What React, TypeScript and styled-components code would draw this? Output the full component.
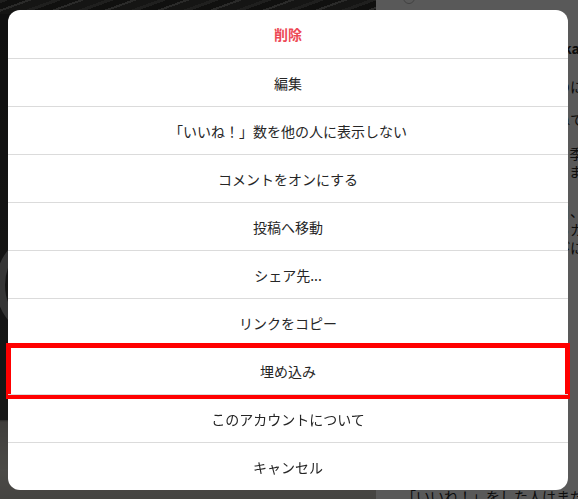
import styled, { createGlobalStyle } from "styled-components";

const Global = createGlobalStyle`
  html, body {
    margin: 0;
    padding: 0;
    height: 100%;
    overflow: hidden;
  }
  body {
    font-family: "Noto Sans CJK JP", "Noto Sans", "Liberation Sans", sans-serif;
    color: #262626;
  }
  #root {
    height: 100%;
  }
`;

const menuItems = [
  { label: "削除", danger: true },
  { label: "編集" },
  { label: "「いいね！」数を他の人に表示しない" },
  { label: "コメントをオンにする" },
  { label: "投稿へ移動" },
  { label: "シェア先..." },
  { label: "リンクをコピー" },
  { label: "埋め込み", marked: true },
  { label: "このアカウントについて" },
  { label: "キャンセル" },
];

// comment lines behind the dim layer, only a sliver shows at the right edge
const comments = [
  { lines: ["今日は朝から友達と海辺のにぎやかな通りへ"], gap: 15 },
  { lines: ["街の小さな本屋さんを訪ねてみました"], gap: 16 },
  { lines: ["古いビルの屋上から見える季節の景色は", "毎日少しずつ変わっていきます。"], gap: 22 },
  { lines: ["朝の光の中で撮った一枚目、静かな時間", "ぼんやりと外を眺めながらカメラを構え", "季節の移ろいを感じるたびに思い出す"], gap: 0 },
];

export default function App() {
  return (
    <>
      <Global />
      <Page>
        <Photo>
          <Ring />
        </Photo>
        <Side>
          <SideInner>
            <Header>
              <Avatar />
            </Header>
            <UserName>tokyo_photo_walks_naka</UserName>
            {comments.map((c, i) => (
              <Comment key={i} gap={c.gap}>
                {c.lines.map((l) => (
                  <Line key={l}>{l}</Line>
                ))}
              </Comment>
            ))}
            <Spacer />
            <Likes>「いいね！」をした人はまだいません</Likes>
          </SideInner>
        </Side>
      </Page>

      <Overlay>
        <Modal>
          {menuItems.map((item) => (
            <Row key={item.label} danger={item.danger}>
              {item.label}
              {item.marked && <Mark />}
            </Row>
          ))}
        </Modal>
      </Overlay>
    </>
  );
}

const Page = styled.div`
  display: flex;
  height: 100%;
`;

const Photo = styled.div`
  position: relative;
  width: 376px;
  flex-shrink: 0;
  overflow: hidden;
  background:
    linear-gradient(180deg, transparent 0, transparent 418px, #b8b5ad 422px, #d6d3ca 470px, #c5c2ba 100%),
    repeating-linear-gradient(160deg, #5a5a58 0 3px, #2e2e2c 3px 9px, #7a7976 9px 11px, #3c3c3a 11px 18px),
    #3d3d3b;
  background-size: 100% 100%, 100% 14px, 100% 100%;
  background-repeat: no-repeat, no-repeat, no-repeat;

  &::after {
    content: "";
    position: absolute;
    left: 0;
    right: 0;
    top: 14px;
    height: 406px;
    background: linear-gradient(180deg, #2f2f2e, #3a3a39 60%, #444442);
  }
`;

const Ring = styled.div`
  position: absolute;
  z-index: 1;
  left: -4px;
  top: 228px;
  width: 96px;
  height: 96px;
  border-radius: 50%;
  border: 9px solid #9a9b9c;
`;

const Side = styled.div`
  flex: 1;
  background: #fff;
  overflow: hidden;
`;

const SideInner = styled.div`
  display: flex;
  flex-direction: column;
  height: 100%;
  box-sizing: border-box;
  padding: 0 0 0 26px;
  font-size: 14px;
  line-height: 18px;
  white-space: nowrap;
  color: #262626;
`;

const Header = styled.div`
  height: 4px;
  display: flex;
  align-items: flex-end;
  overflow: hidden;
  padding-left: 1px;
  margin-bottom: 35px;
`;

const Avatar = styled.div`
  width: 10px;
  height: 10px;
  flex-shrink: 0;
  border-radius: 50%;
  border: 1px solid #bbb;
`;

const UserName = styled.div`
  font-weight: 600;
  margin-bottom: 20px;
`;

const Comment = styled.div<{ gap: number }>`
  margin-bottom: ${(p) => p.gap}px;
`;

const Line = styled.div`
  height: 18px;
`;

const Spacer = styled.div`
  flex: 1;
`;

const Likes = styled.div`
  margin-bottom: -6px;
  height: 18px;
`;

const Overlay = styled.div`
  position: fixed;
  inset: 0;
  z-index: 10;
  background: rgba(0, 0, 0, 0.65);
  display: flex;
  align-items: flex-start;
  padding: 10px 0 0 8px;
`;

const Modal = styled.div`
  width: 560px;
  background: #fff;
  border-radius: 12px;
  display: flex;
  flex-direction: column;
`;

const Row = styled.div<{ danger?: boolean }>`
  position: relative;
  height: 48px;
  box-sizing: border-box;
  display: flex;
  align-items: center;
  justify-content: center;
  font-size: 14px;
  line-height: 18px;
  color: ${(p) => (p.danger ? "#ed4956" : "#262626")};
  font-weight: ${(p) => (p.danger ? 700 : 400)};
  cursor: pointer;

  & + & {
    border-top: 1px solid #dbdbdb;
  }
`;

const Mark = styled.span`
  position: absolute;
  top: -4px;
  bottom: -5px;
  left: -2px;
  right: -2px;
  border: 5px solid #ff0000;
  pointer-events: none;
`;
